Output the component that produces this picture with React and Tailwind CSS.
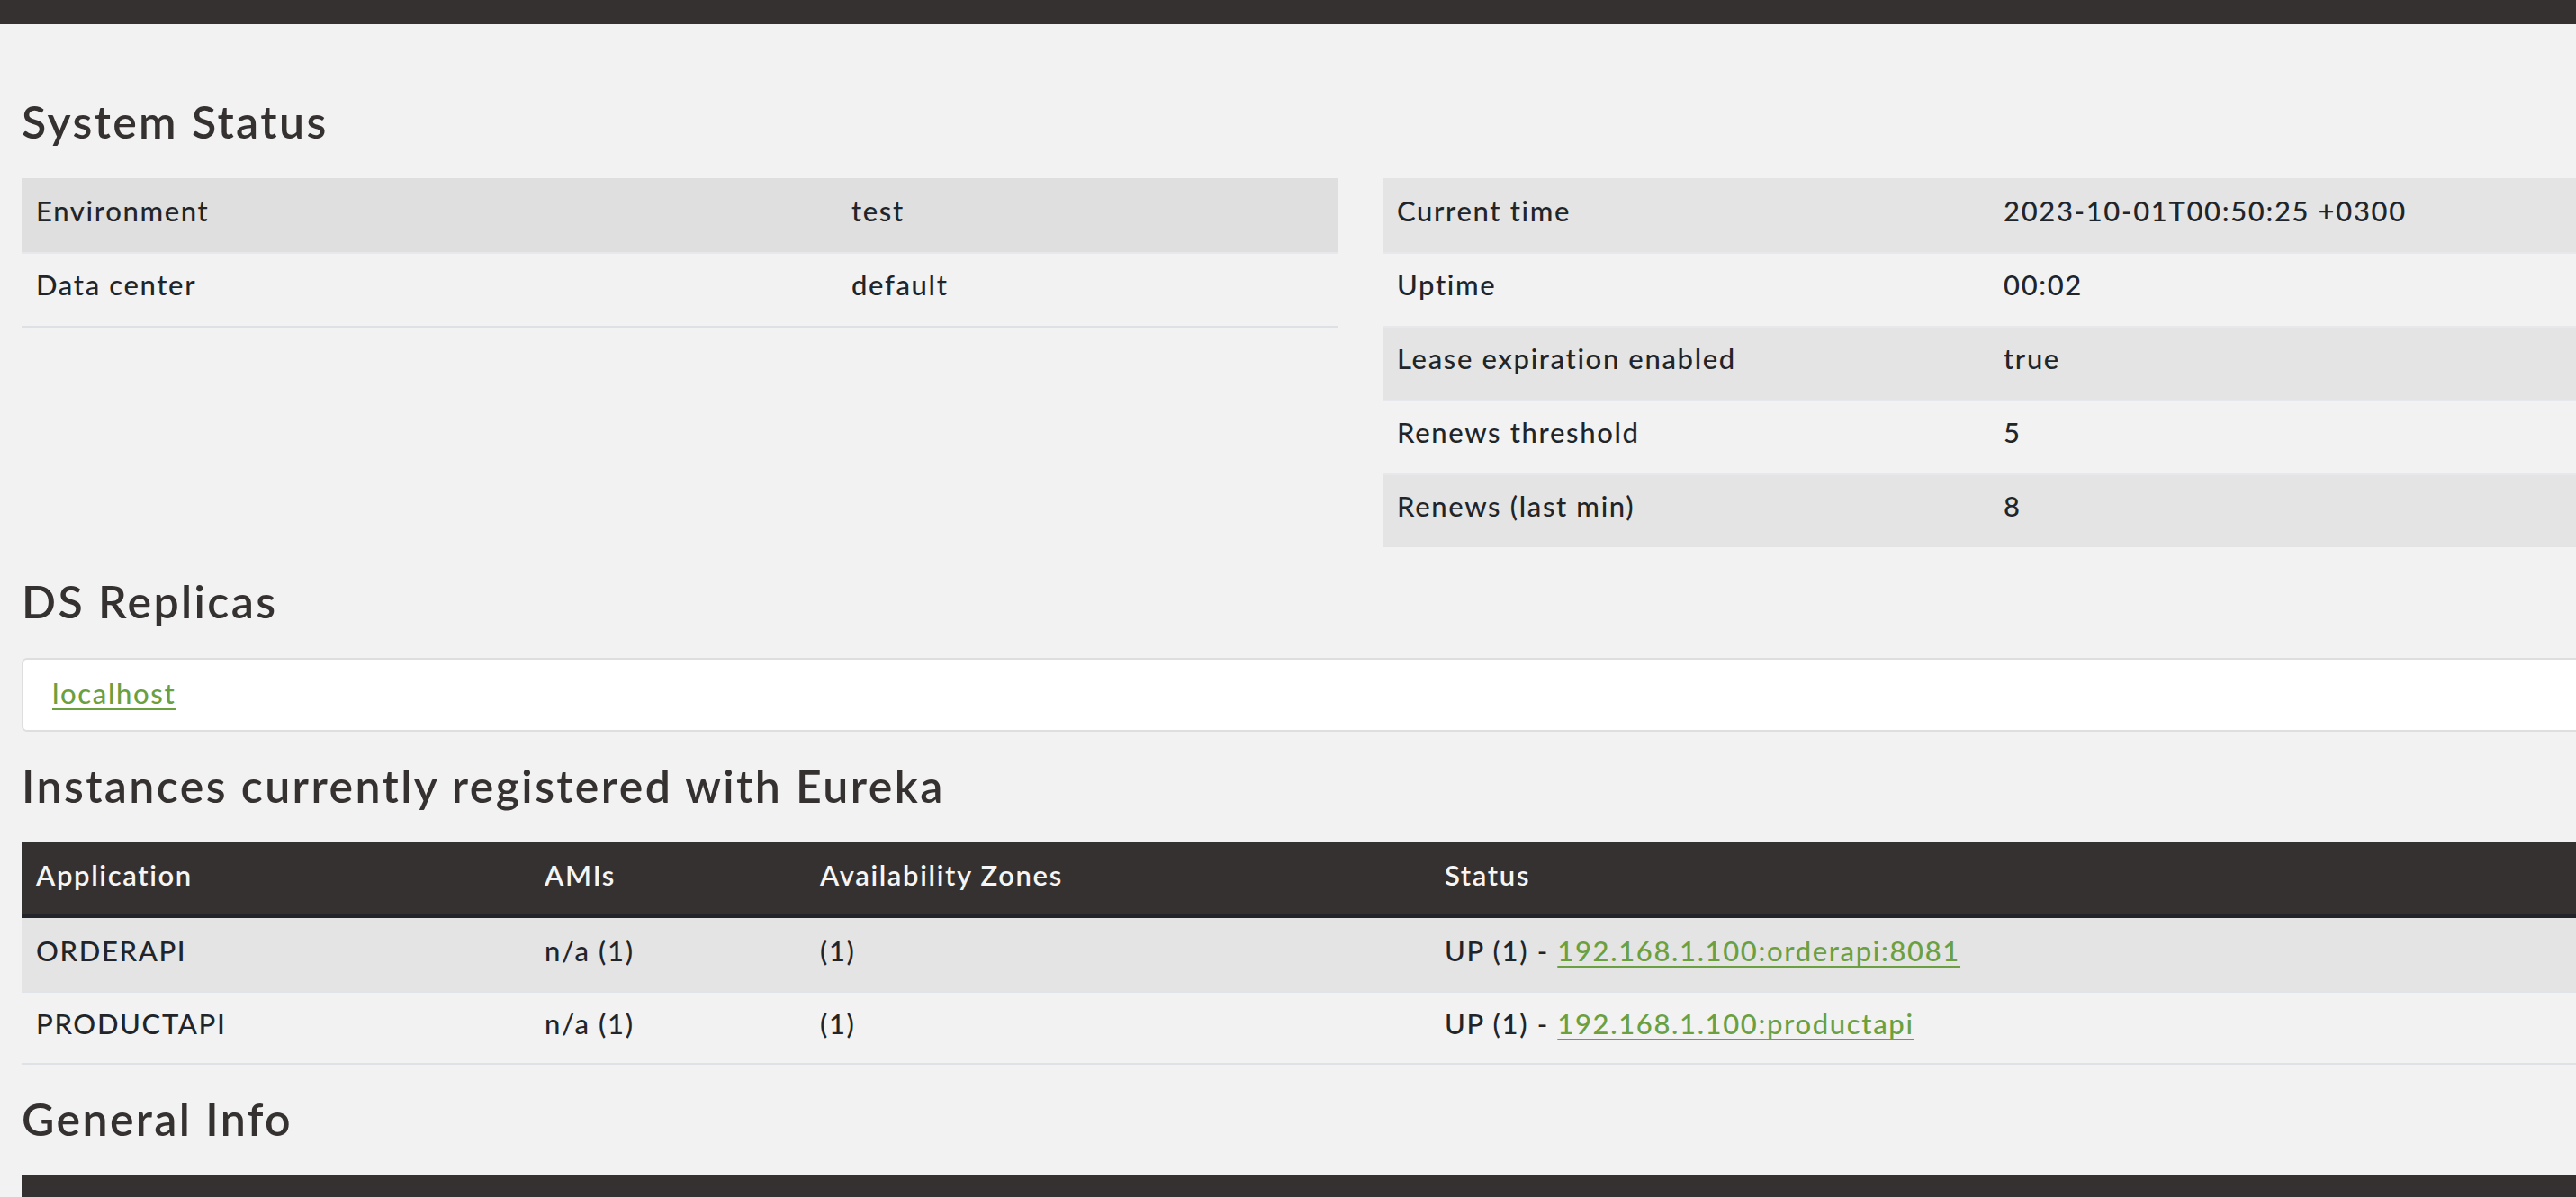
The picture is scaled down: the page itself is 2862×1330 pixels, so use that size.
const systemLeft = [
  ["Environment", "test"],
  ["Data center", "default"],
];

const systemRight = [
  ["Current time", "2023-10-01T00:50:25 +0300"],
  ["Uptime", "00:02"],
  ["Lease expiration enabled", "true"],
  ["Renews threshold", "5"],
  ["Renews (last min)", "8"],
];

const instances = [
  { app: "ORDERAPI", amis: "n/a (1)", zones: "(1)", link: "192.168.1.100:orderapi:8081" },
  { app: "PRODUCTAPI", amis: "n/a (1)", zones: "(1)", link: "192.168.1.100:productapi" },
];

const Heading = ({ children }) => (
  <h2 className="text-[50px] leading-[55px] font-semibold text-[#353130] tracking-[2.4px]">
    {children}
  </h2>
);

const KeyValueTable = ({ rows, labelWidth, stripe }) => (
  <div className="flex flex-col">
    {rows.map(([label, value], i) => (
      <div
        key={label}
        className={`flex h-[82px] ${i % 2 === 0 ? stripe : ""} ${i > 0 ? "pt-[11px] border-t-2 border-[#e6e8eb]" : "pt-[13px]"}`}>
        <div className={`${labelWidth} shrink-0 px-[16px]`}>{label}</div>
        <div className="px-[16px]">{value}</div>
      </div>
    ))}
  </div>
);

export default function App() {
  return (
    <div
      className="min-h-screen w-full overflow-hidden bg-[#f2f2f2] text-[31px] leading-[46px] font-medium tracking-[1.65px] text-[#212529]"
      style={{ fontFamily: "Lato, 'Noto Sans', sans-serif" }}>
      <div className="h-[27px] bg-[#353130]" />
      <div className="w-[3023px] px-[24px]">
        <div className="pt-[81px]">
          <Heading>System Status</Heading>
        </div>
        <div className="mt-[35px] flex gap-[49px]">
          <div className="w-[1463px] border-b-2 border-[#dde1e5] self-start">
            <KeyValueTable rows={systemLeft} labelWidth="w-[906px]" stripe="bg-[#dfdfdf]" />
          </div>
          <div className="w-[1463px]">
            <KeyValueTable rows={systemRight} labelWidth="w-[674px]" stripe="bg-[#e4e4e4]" />
          </div>
        </div>

        <div className="mt-[33px]">
          <Heading>DS Replicas</Heading>
        </div>
        <div className="mt-[35px] h-[82px] rounded-[6px] border-2 border-[#dedede] bg-white px-[32px] pt-[14px]">
          <a href="#" className="text-[#6aa03f] underline decoration-2 underline-offset-[5px]">
            localhost
          </a>
        </div>

        <div className="mt-[33px]">
          <Heading>Instances currently registered with Eureka</Heading>
        </div>
        <div className="mt-[35px] border-b-2 border-[#dee1e5]">
          <div className="grid grid-cols-[565px_306px_694px_1fr] h-[84px] pt-[13px] bg-[#353130] border-b-4 border-[#212529] font-semibold text-[#f5f5f5]">
            <div className="px-[16px]">Application</div>
            <div className="px-[16px]">AMIs</div>
            <div className="px-[16px]">Availability Zones</div>
            <div className="px-[16px]">Status</div>
          </div>
          {instances.map((row, i) => (
            <div
              key={row.app}
              className={`grid grid-cols-[565px_306px_694px_1fr] ${i === 0 ? "h-[81px] pt-[13px] bg-[#e4e4e4]" : "h-[80px] pt-[11px] border-t-2 border-[#e0e3e7]"}`}>
              <div className="px-[16px]">{row.app}</div>
              <div className="px-[16px]">{row.amis}</div>
              <div className="px-[16px]">{row.zones}</div>
              <div className="px-[16px]">
                UP (1) -{" "}
                <a href="#" className="text-[#6aa03f] underline decoration-2 underline-offset-[5px]">
                  {row.link}
                </a>
              </div>
            </div>
          ))}
        </div>

        <div className="mt-[33px]">
          <Heading>General Info</Heading>
        </div>
        <div className="mt-[35px] h-[84px] bg-[#353130]" />
      </div>
    </div>
  );
}
